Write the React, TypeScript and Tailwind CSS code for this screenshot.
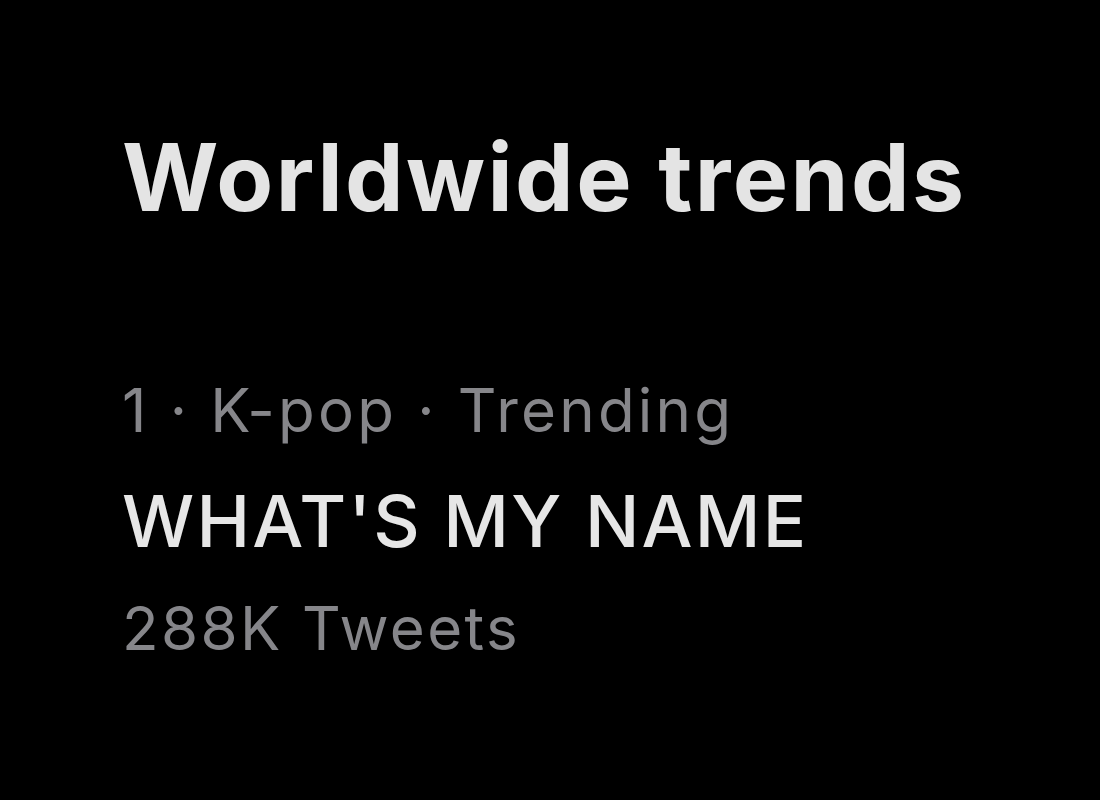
export default function App() {
  return (
    <div className="w-[1100px] h-[800px] bg-black overflow-hidden pl-[122px] pt-[131px] flex flex-col" style={{ fontFamily: "Inter, 'Liberation Sans', sans-serif" }}>
      <h1 className="text-[93px] leading-[92px] font-bold text-[#e4e4e4] tracking-[2.4px]">Worldwide trends</h1>
      <div className="mt-[157px] text-[60px] leading-[60px] text-[#86868a] tracking-[3.2px]">1 · K-pop · Trending</div>
      <div className="mt-[45px] text-[72px] leading-[72px] font-medium text-[#e6e6e6] tracking-[2.2px]">WHAT'S MY NAME</div>
      <div className="mt-[41px] text-[60px] leading-[60px] text-[#86868a] tracking-[2.4px]">288K Tweets</div>
    </div>
  );
}
